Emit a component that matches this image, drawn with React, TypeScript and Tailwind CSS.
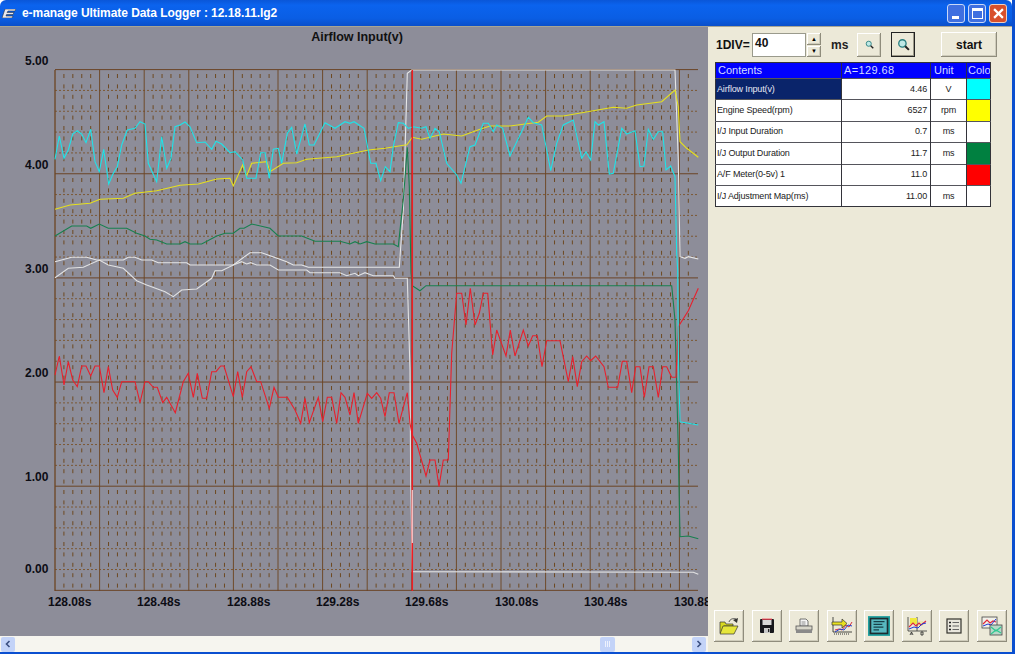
import type { ReactNode } from "react"

type Pt = [number, number]

// traced points are in "3x crop" coords, so each block carries its crop origin
const crop = (ox: number, oy: number, pts: Pt[]): Pt[] => pts.map(([x, y]) => [ox + x / 3, oy + y / 3])
const toPoints = (pts: Pt[]) => pts.map(([x, y]) => `${x.toFixed(1)},${y.toFixed(1)}`).join(" ")

const cyan: Pt[] = [
  ...crop(40, 110, [[45,148],[58,78],[72,145],[85,120],[98,72],[112,62],[125,72],[138,98],[152,58],[165,155],[178,185],[191,118],[206,222],[220,190],[232,170],[245,105],[262,60],[285,55],[300,35],[315,42],[325,160],[350,215],[365,80],[380,175],[393,145],[405,50],[420,45],[435,36],[450,50],[470,98],[495,96],[515,118],[528,94],[545,102],[570,128],[585,125],[608,150],[620,205],[648,205],[662,128],[675,128],[688,205],[700,118],[715,115],[725,160],[742,70],[755,52],[770,132],[795,42],[808,105],[822,105],[855,38],[885,55],[915,35],[930,40],[942,35],[972,55],[992,160],[1008,160],[1022,212],[1036,170],[1050,185],[1060,110]]),
  ...crop(350, 60, [[145,188],[160,190],[175,205],[190,200],[215,205],[228,200],[240,235],[255,205],[268,215],[290,310],[320,345],[333,370],[360,260],[375,255],[400,190],[415,190],[430,215],[440,195],[458,205],[480,288],[510,225],[535,172],[550,188],[575,195],[590,270],[602,332],[620,250],[640,195],[670,180],[695,295],[708,275],[722,300],[735,185],[745,195],[762,185],[778,342],[790,340],[815,205],[830,222],[855,212],[870,320],[882,318],[895,208],[910,238],[925,215],[938,215],[948,330],[962,318],[975,350],[980,580]]),
  ...crop(350, 270, [[983,0],[985,240],[990,455],[1015,460],[1045,465]]),
]

const yellow: Pt[] = [
  ...crop(40, 110, [[45,298],[90,285],[150,280],[180,268],[250,265],[285,250],[350,242],[420,226],[475,222],[530,207],[570,205],[580,228],[608,165],[620,197],[635,160],[680,155],[690,185],[730,160],[770,158],[800,148],[890,140],[985,120],[1035,115],[1095,105]]),
  ...crop(350, 60, [[170,255],[187,232],[215,238],[280,222],[335,228],[390,208],[420,198],[480,198],[565,187],[590,168],[640,168],[790,142],[830,145],[860,135],[935,125],[975,90],[985,140],[990,245],[1010,265],[1045,292]]),
]

const green: Pt[] = [
  ...crop(40, 110, [[45,378],[95,348],[140,348],[152,355],[178,342],[205,355],[260,355],[290,370],[315,378],[330,388],[350,390],[380,402],[420,402],[435,395],[450,402],[485,402],[530,378],[555,370],[580,370],[600,355],[612,355],[635,342],[690,355],[715,378],[785,378],[825,394],[900,394],[930,402],[945,395],[960,402],[980,395],[1005,402],[1060,402],[1075,410]]),
  ...crop(350, 60, [[150,510],[160,420],[172,262],[178,380],[183,640]]),
  ...crop(350, 270, [[187,47],[210,62],[228,47],[965,47],[975,150],[985,540],[990,800],[1015,798],[1045,806]]),
]

const whiteTop: Pt[] = [
  ...crop(40, 110, [[45,455],[95,442],[140,442],[170,450],[250,450],[265,442],[285,442],[305,450],[335,450],[355,458],[440,458],[450,465],[580,465],[630,428],[665,428],[740,455],[760,465],[785,465],[805,472],[1075,472]]),
  ...crop(350, 60, [[148,622],[160,450],[172,40],[185,30],[975,30],[985,300],[990,590],[1005,595],[1015,590],[1045,597]]),
]

const whiteLow: Pt[] = [
  ...crop(40, 110, [[45,503],[85,475],[130,472],[178,450],[205,465],[250,475],[290,512],[320,525],[375,545],[400,560],[425,540],[470,537],[515,505],[525,482],[545,482],[580,465],[605,455],[620,462],[632,458],[650,465],[690,465],[715,480],[800,480],[810,488],[900,488],[920,497],[945,490],[955,497],[975,488],[1000,497],[1060,497],[1065,505]]),
  ...crop(350, 270, [[172,25],[180,300],[182,640],[187,905],[1030,907],[1045,913]]),
]

const red: Pt[] = [
  ...crop(40, 340, [[45,105],[58,48],[72,135],[85,65],[98,120],[112,140],[125,78],[138,78],[152,108],[165,78],[178,78],[192,158],[205,80],[218,150],[232,172],[245,125],[285,125],[300,188],[315,125],[325,125],[340,142],[352,142],[368,188],[380,172],[406,218],[430,125],[445,100],[460,172],[472,100],[487,175],[500,175],[515,95],[528,95],[542,78],[552,78],[580,170],[593,95],[607,172],[620,95],[633,80],[650,125],[662,125],[688,205],[702,142],[715,172],[742,172],[765,210],[782,250],[795,175],[808,248],[835,172],[848,245],[862,172],[875,172],[890,250],[903,158],[915,172]]),
  ...crop(350, 270, [[0,435],[12,368],[25,460],[52,370],[65,385],[80,368],[92,385],[105,440],[118,368],[132,368],[147,460],[172,368],[180,460],[187,495],[200,520],[228,618],[240,570],[255,570],[267,650],[280,570],[295,570],[305,250],[320,70],[335,70],[348,165],[361,55],[375,165],[388,130],[400,70],[413,70],[428,255],[440,180],[468,258],[481,180],[495,258],[520,180],[535,228],[548,197],[562,197],[576,290],[590,212],[630,212],[655,335],[668,260],[682,350],[695,275],[710,258],[722,272],[737,258],[762,290],[775,352],[803,352],[817,274],[830,274],[845,368],[857,290],[870,290],[883,382],[897,290],[910,290],[925,382],[938,290],[950,290],[965,322],[978,322],[985,170],[1015,122],[1045,55]]),
]

const yLabels = [["5.00", 65], ["4.00", 169], ["3.00", 273], ["2.00", 377], ["1.00", 481], ["0.00", 573]] as const
const xLabels = [["128.08s", 48], ["128.48s", 137], ["128.88s", 227], ["129.28s", 316], ["129.68s", 405], ["130.08s", 495], ["130.48s", 584], ["130.88s", 674]] as const

const rows = [
  { name: "Airflow Input(v)", value: "4.46", unit: "V", color: "bg-[#00ffff]", selected: true },
  { name: "Engine Speed(rpm)", value: "6527", unit: "rpm", color: "bg-[#ffff00]" },
  { name: "I/J Input Duration", value: "0.7", unit: "ms", color: "bg-white" },
  { name: "I/J Output Duration", value: "11.7", unit: "ms", color: "bg-[#008040]" },
  { name: "A/F Meter(0-5v) 1", value: "11.0", unit: "", color: "bg-[#ff0000]" },
  { name: "I/J Adjustment Map(ms)", value: "11.00", unit: "ms", color: "bg-white" },
]

const raised = "bg-[#ece9d8] shadow-[inset_-1px_-1px_0_#8f8c7c,inset_1px_1px_0_#ffffff,inset_-2px_-2px_0_#cfccbb]"

function Chart() {
  const majors = Array.from({ length: 15 }, (_, i) => 55 + 44.6 * i)
  const minors = Array.from({ length: 72 }, (_, i) => 55 + 8.92 * i).filter((_, i) => i % 5 !== 0)
  const hLines = Array.from({ length: 26 }, (_, i) => 69.6 + 20.83 * i)
  const series: [Pt[], string][] = [
    [whiteTop, "#e6e6e6"],
    [whiteLow, "#e2e2e2"],
    [green, "#17804f"],
    [red, "#e8202c"],
    [yellow, "#e6e01e"],
    [cyan, "#1fe3e8"],
  ]
  return (
    <svg viewBox="0 27 708 609" className="block h-[609px] w-[708px] font-['Liberation_Sans',sans-serif]">
      <text x="357" y="41" textAnchor="middle" fontSize="12.500" fontWeight="700" fill="#111">
        Airflow Input(v)
      </text>
      {minors.map((x) => (
        <line key={x} x1={x} x2={x} y1="74" y2="590" stroke="#6e4a22" strokeWidth="1" strokeDasharray="4 6.400" />
      ))}
      {hLines.map((y, i) =>
        i % 5 === 0 ? null : (
          <line key={y} x1="55" x2="698" y1={y} y2={y} stroke="#7a5228" strokeWidth="0.900" strokeDasharray="2 2" />
        ),
      )}
      {majors.map((x) => (
        <line key={x} x1={x} x2={x} y1="70" y2="591" stroke="#6f4a2a" strokeWidth={x === 55 ? 1.4 : 1} />
      ))}
      {hLines.map((y, i) =>
        i % 5 === 0 ? <line key={y} x1="55" x2="698" y1={y} y2={y} stroke="#6b4426" strokeWidth="1" /> : null,
      )}
      {yLabels.map(([t, y]) => (
        <text key={t} x="25" y={y} fontSize="12" fontWeight="700" fill="#0c0c14">
          {t}
        </text>
      ))}
      {xLabels.map(([t, x]) => (
        <text key={t} x={x} y="606" fontSize="12" fontWeight="700" fill="#0c0c14">
          {t}
        </text>
      ))}
      {series.map(([pts, c]) => (
        <polyline key={c} points={toPoints(pts)} fill="none" stroke={c} strokeWidth="1.100" />
      ))}
      {/* cursor */}
      <line x1="412.3" x2="412.3" y1="70" y2="591" stroke="#f01c24" strokeWidth="1.500" />
      <line x1="412.3" x2="412.3" y1="490" y2="543" stroke="#f4e8e8" strokeWidth="1" />
    </svg>
  )
}

function ScrollArrow({ left }: { left?: boolean }) {
  return (
    <div className="flex h-[15px] w-[14px] items-center justify-center rounded-[2px] bg-[#c3d3f8]">
      <svg viewBox="0 0 8 8" className="h-2 w-2">
        <path d={left ? "M5.5 1 2.5 4l3 3" : "M2.5 1l3 3-3 3"} fill="none" stroke="#3b4f80" strokeWidth="1.6" />
      </svg>
    </div>
  )
}

function ScrollBar() {
  return (
    <div className="flex h-[16px] w-[708px] items-center bg-[#f6f5ef] pl-px pr-[2px]">
      <ScrollArrow left />
      <div className="ml-[585px] flex h-[15px] w-[15px] items-center justify-center gap-px rounded-[2px] bg-[#c3d3f8]">
        <span className="h-[6px] w-px bg-[#eef2fd]" />
        <span className="h-[6px] w-px bg-[#eef2fd]" />
        <span className="h-[6px] w-px bg-[#eef2fd]" />
      </div>
      <div className="flex-1" />
      <ScrollArrow />
    </div>
  )
}

function Lens({ size }: { size: number }) {
  return (
    <svg viewBox="0 0 12 12" style={{ width: size, height: size }}>
      <circle cx="5" cy="5" r="3.4" fill="#bfe9e6" stroke="#2a7f80" strokeWidth="1.2" />
      <path d="M7.6 7.6 11 11" stroke="#222" strokeWidth="1.8" />
    </svg>
  )
}

function SideButton({ children, pressed, className }: { children: ReactNode; pressed?: boolean; className?: string }) {
  return (
    <button
      className={`flex items-center justify-center ${
        pressed ? "bg-[#ece9d8] shadow-[inset_0_0_0_1px_#222,inset_-2px_-2px_0_#9d9a8a]" : raised
      } ${className ?? ""}`}
    >
      {children}
    </button>
  )
}

function TopControls() {
  return (
    <div className="flex h-[25px] items-center pl-[7px] font-['Liberation_Sans',sans-serif]">
      <span className="w-[36px] text-[12px] font-bold text-[#111]">1DIV=</span>
      <div className="flex h-[24px] w-[54px] items-start border border-[#9a9a8c] bg-white pl-[2px] text-[12px] leading-[18px] font-bold text-[#111]">
        40
      </div>
      <div className="ml-px flex w-[14px] flex-col gap-px">
        <div className={`flex h-[12px] items-center justify-center text-[6px] leading-none text-black ${raised}`}>▲</div>
        <div className={`flex h-[11px] items-center justify-center text-[6px] leading-none text-black ${raised}`}>▼</div>
      </div>
      <span className="ml-[10px] w-[26px] text-[12px] font-bold text-[#222]">ms</span>
      <SideButton className="h-[24px] w-[24px]">
        <Lens size={9} />
      </SideButton>
      <SideButton pressed className="ml-[10px] h-[25px] w-[24px]">
        <Lens size={13} />
      </SideButton>
      <SideButton className="ml-[26px] h-[25px] w-[56px] text-[12px] font-bold text-[#111]">start</SideButton>
    </div>
  )
}

function DataTable() {
  return (
    <table className="mt-[5px] ml-[6px] w-[275px] table-fixed border-collapse border border-[#33333a] font-['Liberation_Sans',sans-serif] text-[9px] tracking-[-0.15px] text-[#222]">
      <colgroup>
        <col className="w-[126px]" />
        <col className="w-[89px]" />
        <col className="w-[36px]" />
        <col className="w-[24px]" />
      </colgroup>
      <thead>
        <tr className="h-[16px] bg-[#0000ff] text-left text-[11px] leading-none font-normal tracking-normal text-[#d4dcff]">
          <th className="border-r border-[#2a2a50] pl-[2px] font-normal">Contents</th>
          <th className="border-r border-[#2a2a50] pl-[2px] font-normal tracking-[0.4px]">A=129.68</th>
          <th className="border-r border-[#2a2a50] pl-[3px] font-normal">Unit</th>
          <th className="overflow-hidden pl-px font-normal whitespace-nowrap">Color</th>
        </tr>
      </thead>
      <tbody>
        {rows.map((r) => (
          <tr key={r.name} className="h-[21.4px] border-t border-[#55555c] bg-white leading-none">
            <td className={`border-r border-[#33333a] pl-px ${r.selected ? "bg-[#0a246a] text-[#e8e8f4]" : ""}`}>{r.name}</td>
            <td className="border-r border-[#33333a] pr-[3px] text-right">{r.value}</td>
            <td className="border-r border-[#33333a] text-center">{r.unit}</td>
            <td className={r.color} />
          </tr>
        ))}
      </tbody>
    </table>
  )
}

const toolIcons: ReactNode[] = [
  <svg key="open" viewBox="0 0 20 18" className="h-[18px] w-[20px]">
    <path d="M1 5h5l1 2h7v2H5L2 16H1z" fill="#d8d820" stroke="#333" strokeWidth=".7" />
    <path d="M4 9h15l-4 8H1z" fill="#e6e63a" stroke="#333" strokeWidth=".7" />
    <path d="M10 5c1-3 4-4 7-3" fill="none" stroke="#555" strokeWidth="1" />
    <path d="M19 1l-1 5-4-3z" fill="#333" />
  </svg>,
  <svg key="save" viewBox="0 0 16 16" className="h-[16px] w-[16px]">
    <rect x="1" y="1" width="14" height="14" rx="1" fill="#17171c" />
    <rect x="3" y="0.6" width="10" height="1.2" fill="#e84050" />
    <rect x="3.5" y="2" width="9" height="5" fill="#d8d8d8" />
    <rect x="5" y="10" width="6" height="5" fill="#c8c8c8" />
    <rect x="9" y="11" width="1.3" height="3" fill="#222" />
  </svg>,
  <svg key="print" viewBox="0 0 18 16" className="h-[16px] w-[18px]">
    <path d="M5 1h6l2 2v5H5z" fill="#f4f4f4" stroke="#555" strokeWidth=".8" />
    <path d="M6.5 4h4M6.5 6h4" stroke="#777" strokeWidth=".8" />
    <rect x="1" y="8" width="16" height="4" fill="#d8d6ca" stroke="#555" strokeWidth=".8" />
    <rect x="1" y="12" width="16" height="3" fill="#8a8a8a" />
  </svg>,
  <svg key="import" viewBox="0 0 22 20" className="h-[20px] w-[22px]">
    <path d="M2 1v15h19" fill="none" stroke="#222" strokeWidth=".8" />
    <path d="M4 14l4-1 3 1 4-5 3 2 3-5" fill="none" stroke="#d83040" strokeWidth="1" />
    <path d="M4 16l5-3 4 1 4-5 4 1" fill="none" stroke="#2040d0" strokeWidth="1" />
    <path d="M1 6h10V3l5 4.500-5 4.500V9H1z" fill="#e8e020" stroke="#333" strokeWidth=".7" />
    <path d="M3 18h16" stroke="#333" strokeWidth="1" strokeDasharray="1 1" />
  </svg>,
  <svg key="panel" viewBox="0 0 20 18" className="h-[20px] w-[22px]">
    <rect x="0" y="0" width="20" height="18" fill="#20a0a0" />
    <rect x="1.500" y="1.500" width="17" height="15" fill="#1e2c30" />
    <rect x="3" y="3" width="14" height="12" fill="#58b8c0" />
    <path d="M5 5h10M5 7.500h8M5 10h9M5 12.500h5" stroke="#184048" strokeWidth="1" />
  </svg>,
  <svg key="compare" viewBox="0 0 22 20" className="h-[20px] w-[22px]">
    <path d="M2 1v14h19M11 1v14" fill="none" stroke="#333" strokeWidth=".8" />
    <rect x="4" y="2" width="7" height="6" fill="#f0e840" />
    <rect x="12" y="5" width="5" height="5" fill="#e8e8b0" />
    <path d="M3 11l4-4 3 3 3-3 2 2 5-4" fill="none" stroke="#e02838" strokeWidth="1.1" />
    <path d="M3 13l5-2 4 1 4-4 4-1" fill="none" stroke="#2038d8" strokeWidth="1" />
    <path d="M4 19l1.500-3 1.500 3M5 18h1M15 16v3h2v-3z" fill="none" stroke="#222" strokeWidth=".8" />
  </svg>,
  <svg key="list" viewBox="0 0 16 16" className="h-[16px] w-[16px]">
    <rect x="1" y="1" width="14" height="14" fill="#e8e6dc" stroke="#33332c" strokeWidth="1.200" />
    <path d="M3 4.500h2M3 8h2M3 11.500h2" stroke="#222" strokeWidth="1.500" />
    <path d="M6.500 4.500h6.500M6.500 8h6.500M6.500 11.500h6.500" stroke="#666" strokeWidth="1" />
  </svg>,
  <svg key="windows" viewBox="0 0 22 20" className="h-[20px] w-[22px]">
    <rect x="1" y="1" width="15" height="11" fill="#f2f0e8" stroke="#444" strokeWidth=".8" />
    <path d="M2 8l4-4 3 3 3-2 3 1" fill="none" stroke="#e02838" strokeWidth="1.200" />
    <path d="M2 10l5-2 3 1 5-6" fill="none" stroke="#2038d8" strokeWidth="1" />
    <rect x="9" y="9" width="12" height="10" fill="#b8d8c8" stroke="#444" strokeWidth=".8" />
    <path d="M10 11l5 4 5-4M10 18l5-4 5 3" fill="none" stroke="#30c890" strokeWidth="1.200" />
  </svg>,
]

function Toolbar() {
  return (
    <div className="mt-auto flex gap-[7.5px] pb-[10px] pl-[5px]">
      {toolIcons.map((icon, i) => (
        <SideButton key={i} className="h-[32px] w-[30px]">
          {icon}
        </SideButton>
      ))}
    </div>
  )
}

function TitleBar() {
  return (
    <div className="flex h-[27px] items-center rounded-t-[6px] border-b border-[#a8a594] bg-[linear-gradient(#0a56d8,#0b63ee_20%,#0a5ee4_70%,#0a4fca)] pr-[5px] pl-[2px] font-['Liberation_Sans',sans-serif]">
      <svg viewBox="0 0 14 9" className="h-[9px] w-[14px]">
        <path d="M3 0h11l-1 2H6L5 3.500h7l-1 2H4.500L4 7h7l-1 2H0z" fill="#e8e8ee" stroke="#222" strokeWidth=".5" />
      </svg>
      <span className="ml-[6px] text-[12px] font-bold tracking-[-0.05px] whitespace-nowrap text-white">
        e-manage Ultimate Data Logger : 12.18.11.lg2
      </span>
      <div className="ml-auto flex gap-[3px]">
        <div className="flex h-[19px] w-[18px] items-end rounded-[3px] border border-[#c8d8f8] bg-[#3f6fe0] pb-[3px] pl-[4px]">
          <span className="h-[3px] w-[7px] bg-white" />
        </div>
        <div className="flex h-[19px] w-[18px] items-center justify-center rounded-[3px] border border-[#c8d8f8] bg-[#3f6fe0]">
          <span className="h-[11px] w-[11px] border border-t-[3px] border-white" />
        </div>
        <div className="flex h-[19px] w-[18px] items-center justify-center rounded-[3px] border border-[#f0d0c0] bg-[#d8502c]">
          <svg viewBox="0 0 10 10" className="h-[11px] w-[11px]">
            <path d="M1 1l8 8M9 1l-8 8" stroke="#fff" strokeWidth="2" />
          </svg>
        </div>
      </div>
    </div>
  )
}

export default function App() {
  return (
    <div className="h-[655px] w-[1023px] overflow-hidden bg-white">
      <div className="flex h-[654px] w-[1015px] flex-col border-r-[3px] border-b-[2px] border-r-[#0a4fd0] border-b-[#0a4fd0]">
        <TitleBar />
        <div className="flex flex-1">
          <div className="flex w-[708px] flex-col bg-[#8d8d99]">
            <Chart />
            <ScrollBar />
          </div>
          <div className="flex flex-1 flex-col bg-[#ece9d8] pt-[5px] pl-px">
            <TopControls />
            <DataTable />
            <Toolbar />
          </div>
        </div>
      </div>
    </div>
  )
}
